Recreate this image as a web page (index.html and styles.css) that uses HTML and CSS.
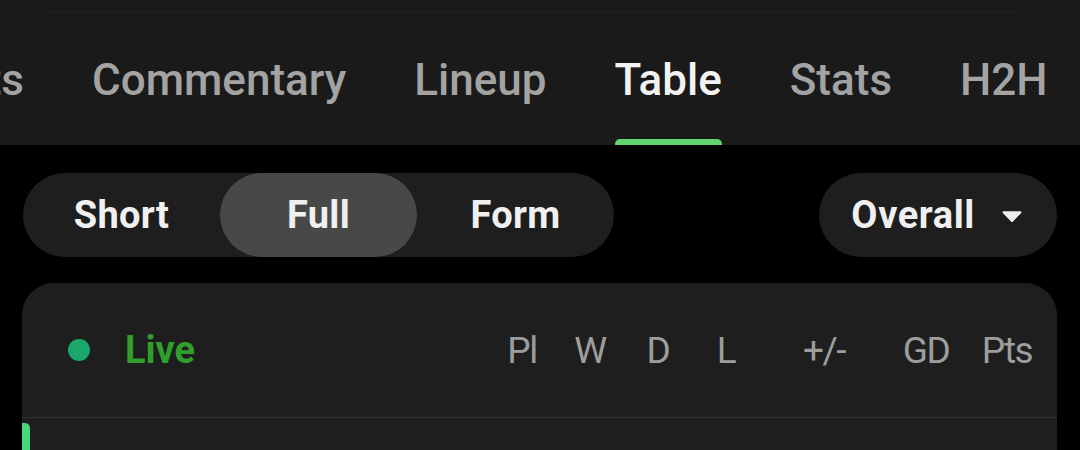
FILE: index.html
```html
<!DOCTYPE html>
<html lang="en">
<head>
    <meta charset="UTF-8">
    <meta name="viewport" content="width=device-width, initial-scale=1.0">
    <title>Match - Table</title>
    <link rel="stylesheet" href="styles.css">
</head>
<body>
    <div class="tabbar">
        <div class="tabbar-line"></div>
        <nav class="tabs">
            <div class="tab tab-scrolled"><span class="tab-label">Facts</span></div>
            <div class="tab"><span class="tab-label">Commentary</span></div>
            <div class="tab"><span class="tab-label">Lineup</span></div>
            <div class="tab active"><span class="tab-label">Table</span><span class="tab-indicator"></span></div>
            <div class="tab"><span class="tab-label">Stats</span></div>
            <div class="tab"><span class="tab-label">H2H</span></div>
        </nav>
    </div>

    <div class="controls">
        <div class="segmented">
            <button class="segment">Short</button>
            <button class="segment selected">Full</button>
            <button class="segment">Form</button>
        </div>
        <button class="dropdown">
            <span>Overall</span>
            <svg class="caret" width="20" height="11" viewBox="0 0 20 11">
                <path d="M1.5 1.2 L18.5 1.2 L10 10 Z" fill="#f0f0f0" stroke="#f0f0f0" stroke-width="2" stroke-linejoin="round"/>
            </svg>
        </button>
    </div>

    <div class="card">
        <div class="table-head">
            <span class="live-dot"></span>
            <span class="live-label">Live</span>
            <div class="cols">
                <span class="col">Pl</span>
                <span class="col">W</span>
                <span class="col">D</span>
                <span class="col">L</span>
                <span class="col col-diff">+/-</span>
                <span class="col col-gd">GD</span>
                <span class="col col-pts">Pts</span>
            </div>
        </div>
        <div class="table-row">
            <span class="rank-bar"></span>
        </div>
    </div>
</body>
</html>
```

FILE: styles.css
```css
body {
    margin: 0;
    background-color: #000000;
    font-family: Roboto, "Noto Sans", sans-serif;
    color: #f0f0f0;
    overflow: hidden;
}

.tabbar {
    background-color: #1a1a1a;
    height: 145px;
    padding-top: 12px;
    box-sizing: border-box;
    overflow: hidden;
}

.tabbar-line {
    height: 1px;
    margin: 0 60px 0 45px;
    background-color: #212121;
}

.tabs {
    display: flex;
    height: 132px;
}

.tab {
    display: flex;
    flex-direction: column;
    align-items: stretch;
    padding: 0 34px;
    flex-shrink: 0;
}

/* scrolled past: only the tail of the label is on screen */
.tab.tab-scrolled {
    width: 24px;
    padding-left: 0;
    align-items: flex-end;
}

.tab-label {
    margin-top: 45px;
    font-size: 44px;
    line-height: 44px;
    font-weight: 500;
    color: #a3a3a3;
    white-space: nowrap;
}

.tab.active .tab-label {
    color: #f2f2f2;
}

.tab-indicator {
    margin-top: auto;
    height: 6px;
    border-radius: 5px 5px 0 0;
    background-color: #5fd46f;
}

.controls {
    display: flex;
    justify-content: space-between;
    margin: 28px 23px 0 23px;
}

.segmented {
    display: flex;
    background-color: #1e1e1e;
    border-radius: 42px;
    height: 84px;
}

.segment,
.dropdown {
    font-family: Roboto, "Noto Sans", sans-serif;
    font-size: 38px;
    font-weight: 700;
    letter-spacing: 0.3px;
    color: #f0f0f0;
    border: none;
    background: none;
    cursor: pointer;
}

.segment {
    width: 197px;
    height: 84px;
    padding: 0;
    border-radius: 42px;
}

.segment.selected {
    background-color: #484848;
}

.dropdown {
    display: flex;
    align-items: center;
    gap: 27px;
    height: 84px;
    padding: 0 35px 0 32px;
    border-radius: 42px;
    background-color: #1e1e1e;
    letter-spacing: 0.6px;
}

.caret {
    display: block;
    margin-top: 2px;
}

.card {
    margin: 26px 23px 0 22px;
    background-color: #1e1e1e;
    border-radius: 32px 32px 0 0;
    overflow: hidden;
}

.table-head {
    display: flex;
    align-items: center;
    height: 134px;
    padding-left: 46px;
    border-bottom: 1px solid #333333;
}

.live-dot {
    width: 22px;
    height: 22px;
    border-radius: 50%;
    background-color: #1ba66b;
}

.live-label {
    margin-left: 35px;
    font-size: 38px;
    font-weight: 700;
    color: #2f9e2b;
}

.cols {
    display: flex;
    margin-left: auto;
    margin-right: 20px;
    gap: 8px;
}

.col {
    width: 60px;
    text-align: center;
    font-size: 37px;
    color: #9d9d9d;
    letter-spacing: -1.5px;
}

.col-diff {
    margin-left: 30px;
}

.col-gd {
    margin-left: 34px;
}

.col-pts {
    margin-left: 13px;
}

.table-row {
    height: 40px;
    padding-top: 5px;
    box-sizing: border-box;
}

.rank-bar {
    display: block;
    width: 8px;
    height: 35px;
    border-radius: 0 5px 0 0;
    background-color: #47d47c;
}
```
